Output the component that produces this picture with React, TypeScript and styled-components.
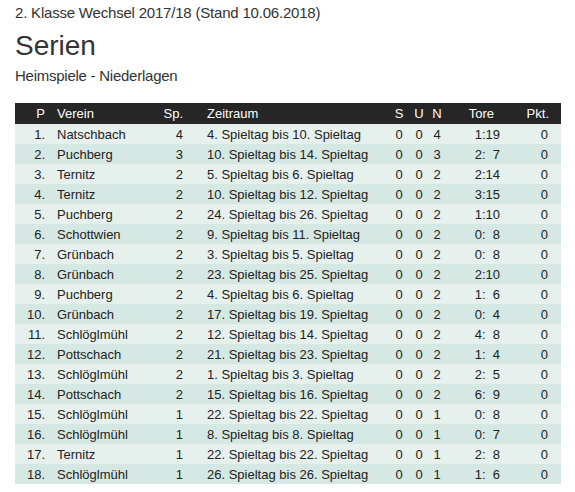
import React from "react";
import styled, { createGlobalStyle } from "styled-components";

const GlobalStyle = createGlobalStyle`
  html, body { margin: 0; padding: 0; background: #fff; }
  body { font-family: "Liberation Sans", Arial, sans-serif; color: #333; }
`;

const Page = styled.div`
  padding: 3px 15px 0 15px;
  width: 546px;
`;

const Title = styled.div`
  font-size: 15px;
  line-height: 20px;
  letter-spacing: -0.2px;
  color: #333;
`;

const Heading = styled.h1`
  margin: 7px 0 0 0;
  font-size: 28px;
  line-height: 32px;
  font-weight: 400;
  color: #333;
`;

const Sub = styled.div`
  margin-top: 4px;
  font-size: 15px;
  line-height: 20px;
  letter-spacing: -0.25px;
  color: #333;
`;

const COLS = "42px 100px 26px 205px 22px 18px 18px 56px 59px";

const Table = styled.div`
  margin-top: 17px;
  display: flex;
  flex-direction: column;
  font-size: 13px;
`;

const HeadRow = styled.div`
  display: grid;
  grid-template-columns: ${COLS};
  height: 21px;
  align-items: center;
  background: #262626;
  color: #fff;
`;

const Row = styled.div<{ $alt: boolean }>`
  display: grid;
  grid-template-columns: ${COLS};
  height: 20px;
  align-items: center;
  background: ${(p) => (p.$alt ? "#d6e8e3" : "#e6f0ed")};
  color: #222;
`;

const Cell = styled.div<{ $align?: "left" | "right" | "center"; $pl?: number; $pr?: number }>`
  text-align: ${(p) => p.$align || "left"};
  padding-left: ${(p) => p.$pl || 0}px;
  padding-right: ${(p) => p.$pr || 0}px;
  white-space: pre;
  overflow: hidden;
`;

type R = [string, number, string, number, number, number, string, number];

const rows: R[] = [
  ["Natschbach", 4, "4. Spieltag bis 10. Spieltag", 0, 0, 4, "1:19", 0],
  ["Puchberg", 3, "10. Spieltag bis 14. Spieltag", 0, 0, 3, "2:  7", 0],
  ["Ternitz", 2, "5. Spieltag bis 6. Spieltag", 0, 0, 2, "2:14", 0],
  ["Ternitz", 2, "10. Spieltag bis 12. Spieltag", 0, 0, 2, "3:15", 0],
  ["Puchberg", 2, "24. Spieltag bis 26. Spieltag", 0, 0, 2, "1:10", 0],
  ["Schottwien", 2, "9. Spieltag bis 11. Spieltag", 0, 0, 2, "0:  8", 0],
  ["Grünbach", 2, "3. Spieltag bis 5. Spieltag", 0, 0, 2, "0:  8", 0],
  ["Grünbach", 2, "23. Spieltag bis 25. Spieltag", 0, 0, 2, "2:10", 0],
  ["Puchberg", 2, "4. Spieltag bis 6. Spieltag", 0, 0, 2, "1:  6", 0],
  ["Grünbach", 2, "17. Spieltag bis 19. Spieltag", 0, 0, 2, "0:  4", 0],
  ["Schlöglmühl", 2, "12. Spieltag bis 14. Spieltag", 0, 0, 2, "4:  8", 0],
  ["Pottschach", 2, "21. Spieltag bis 23. Spieltag", 0, 0, 2, "1:  4", 0],
  ["Schlöglmühl", 2, "1. Spieltag bis 3. Spieltag", 0, 0, 2, "2:  5", 0],
  ["Pottschach", 2, "15. Spieltag bis 16. Spieltag", 0, 0, 2, "6:  9", 0],
  ["Schlöglmühl", 1, "22. Spieltag bis 22. Spieltag", 0, 0, 1, "0:  8", 0],
  ["Schlöglmühl", 1, "8. Spieltag bis 8. Spieltag", 0, 0, 1, "0:  7", 0],
  ["Ternitz", 1, "22. Spieltag bis 22. Spieltag", 0, 0, 1, "2:  8", 0],
  ["Schlöglmühl", 1, "26. Spieltag bis 26. Spieltag", 0, 0, 1, "1:  6", 0],
];

export default function App() {
  return (
    <>
      <GlobalStyle />
      <Page>
        <Title>2. Klasse Wechsel 2017/18 (Stand 10.06.2018)</Title>
        <Heading>Serien</Heading>
        <Sub>Heimspiele - Niederlagen</Sub>
        <Table>
          <HeadRow>
            <Cell $align="right" $pr={12}>P</Cell>
            <Cell>Verein</Cell>
            <Cell $align="right">Sp.</Cell>
            <Cell $pl={24}>Zeitraum</Cell>
            <Cell $align="center">S</Cell>
            <Cell $align="center">U</Cell>
            <Cell $align="center">N</Cell>
            <Cell $align="right" $pr={8}>Tore</Cell>
            <Cell $align="right" $pr={12}>Pkt.</Cell>
          </HeadRow>
          {rows.map((r, i) => (
            <Row key={i} $alt={i % 2 === 1}>
              <Cell $align="right" $pr={12}>{i + 1}.</Cell>
              <Cell>{r[0]}</Cell>
              <Cell $align="right">{r[1]}</Cell>
              <Cell $pl={24}>{r[2]}</Cell>
              <Cell $align="center">{r[3]}</Cell>
              <Cell $align="center">{r[4]}</Cell>
              <Cell $align="center">{r[5]}</Cell>
              <Cell $align="right" $pr={2}>{r[6]}</Cell>
              <Cell $align="right" $pr={13}>{r[7]}</Cell>
            </Row>
          ))}
        </Table>
      </Page>
    </>
  );
}
